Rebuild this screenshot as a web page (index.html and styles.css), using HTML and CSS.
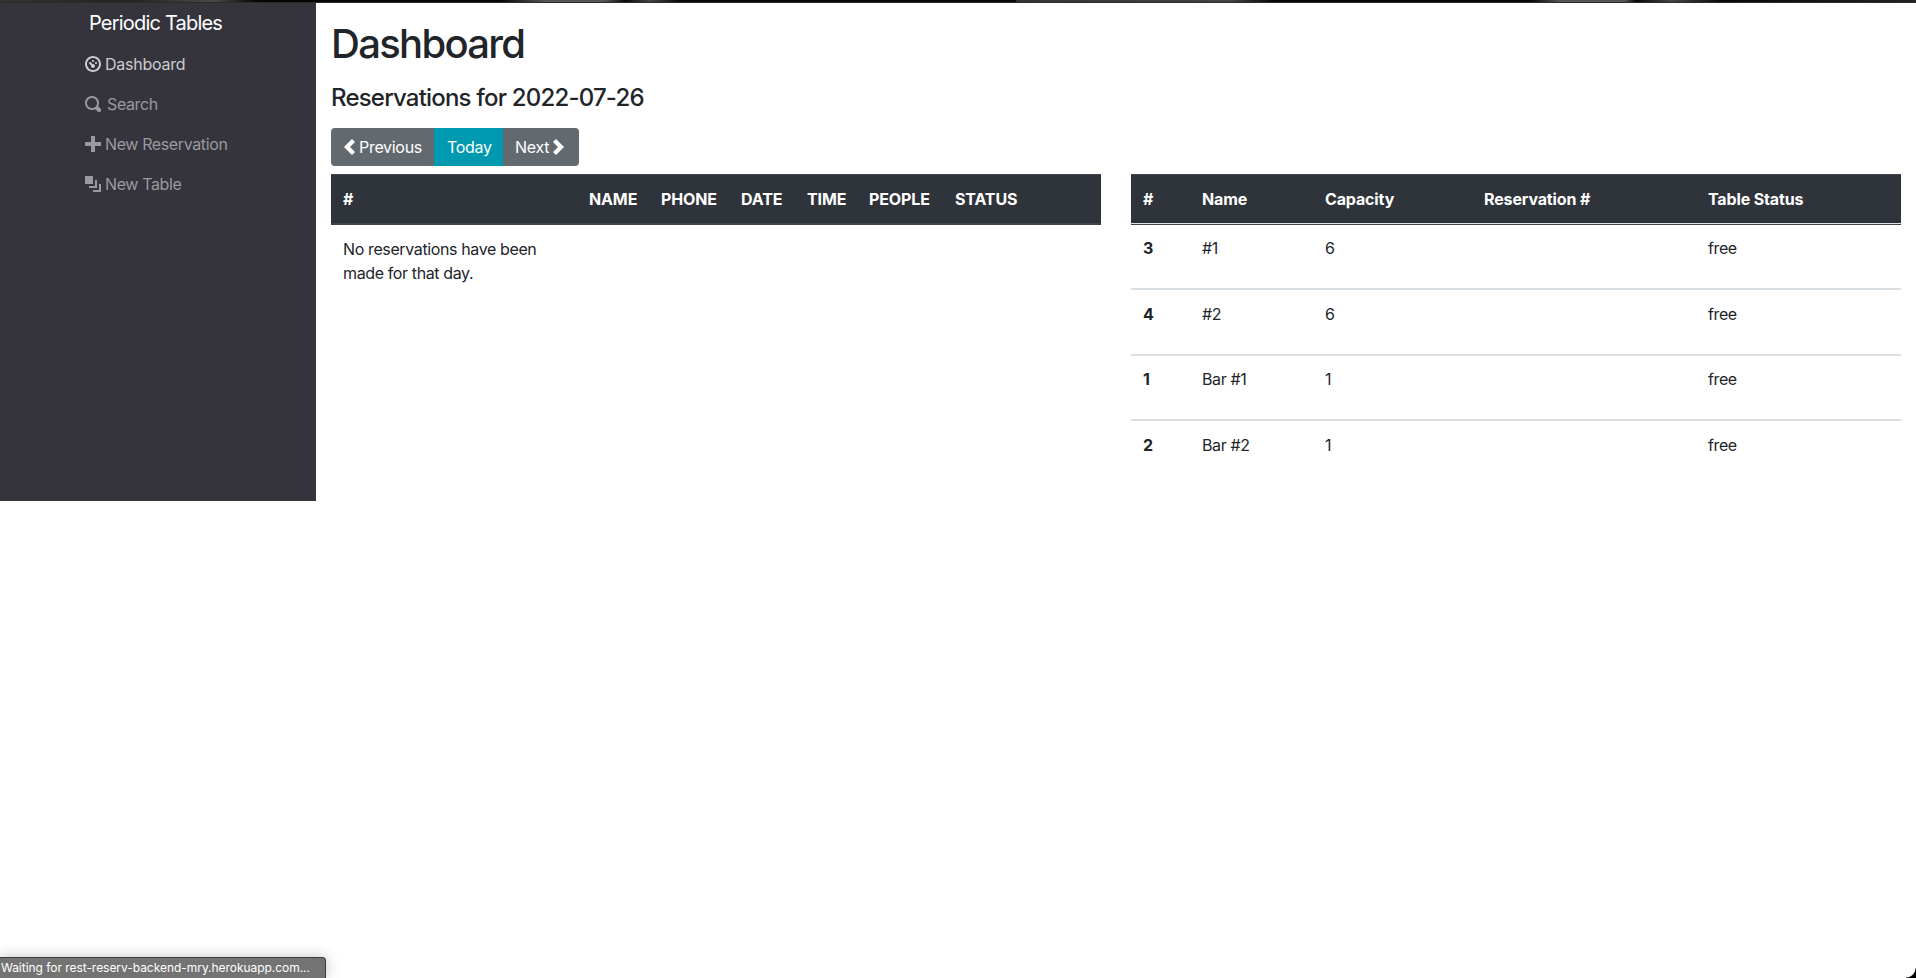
FILE: index.html
```html
<!DOCTYPE html>
<html lang="en">
<head>
<meta charset="utf-8">
<title>Periodic Tables</title>
<link rel="stylesheet" href="styles.css">
</head>
<body>
<div class="strip"></div>
<div class="layout">
  <nav class="sidebar">
    <a class="brand">Periodic Tables</a>
    <ul class="menu">
      <li class="active"><svg class="oi" viewBox="0 0 8 8"><path d="M4 0c-2.2 0-4 1.8-4 4s1.8 4 4 4 4-1.8 4-4-1.8-4-4-4zm0 1c1.66 0 3 1.34 3 3s-1.34 3-3 3-3-1.34-3-3 1.34-3 3-3zm0 1c-.28 0-.5.22-.5.5s.22.5.5.5.5-.22.5-.5-.22-.5-.5-.5zm-1.66 1a.5.5 0 0 0-.19.84l.91.91c-.02.08-.06.16-.06.25 0 .55.45 1 1 1s1-.45 1-1-.45-1-1-1c-.09 0-.17.04-.25.06l-.91-.91a.5.5 0 0 0-.5-.16zm3.16 0c-.28 0-.5.22-.5.5s.22.5.5.5.5-.22.5-.5-.22-.5-.5-.5z"/></svg><span>Dashboard</span></li>
      <li class="search"><svg class="oi" viewBox="0 0 8 8"><path d="M3.5 0c-1.93 0-3.5 1.57-3.5 3.5s1.57 3.5 3.5 3.5c.59 0 1.17-.14 1.66-.41a1 1 0 0 0 .13.13l1 1a1.02 1.02 0 1 0 1.44-1.44l-1-1a1 1 0 0 0-.16-.13c.27-.49.44-1.06.44-1.66 0-1.93-1.55-3.5-3.5-3.5zm0 1c1.39 0 2.5 1.11 2.5 2.5 0 .66-.24 1.27-.66 1.72l-.03.03a1 1 0 0 0-.13.13c-.44.4-1.04.63-1.69.63-1.39 0-2.5-1.11-2.5-2.5s1.11-2.5 2.5-2.5z"/></svg><span>Search</span></li>
      <li><svg class="oi" viewBox="0 0 8 8"><path d="M3 0v3h-3v2h3v3h2v-3h3v-2h-3v-3h-2z"/></svg><span>New Reservation</span></li>
      <li><svg class="oi" viewBox="0 0 8 8"><path d="M0 0v4h4v-4h-4zm5 2v3h-3v1h4v-4h-1zm2 2v3h-3v1h4v-4h-1z"/></svg><span>New Table</span></li>
    </ul>
  </nav>
  <main class="content">
    <h1>Dashboard</h1>
    <h4>Reservations for 2022-07-26</h4>
    <div class="btn-group">
      <button class="btn prev"><svg class="chev" viewBox="1 0 5.5 8"><path d="M5 0l-4 4 4 4 1.5-1.5-2.5-2.5 2.5-2.5-1.5-1.5z"/></svg><span>Previous</span></button>
      <button class="btn today"><span>Today</span></button>
      <button class="btn next"><span>Next</span><svg class="chev" viewBox="1 0 5.5 8"><path d="M2.5 0l-1.5 1.5 2.5 2.5-2.5 2.5 1.5 1.5 4-4-4-4z"/></svg></button>
    </div>
    <div class="tables">
      <table class="reservations">
        <colgroup><col class="r1"><col class="r2"><col class="r3"><col class="r4"><col class="r5"><col class="r6"><col></colgroup>
        <thead><tr><th>#</th><th>NAME</th><th>PHONE</th><th>DATE</th><th>TIME</th><th>PEOPLE</th><th>STATUS</th></tr></thead>
        <tbody><tr><td>No reservations have been made for that day.</td></tr></tbody>
      </table>
      <table class="seating">
        <colgroup><col class="s1"><col class="s2"><col class="s3"><col class="s4"><col></colgroup>
        <thead><tr><th>#</th><th>Name</th><th>Capacity</th><th>Reservation #</th><th>Table Status</th></tr></thead>
        <tbody>
          <tr><th>3</th><td>#1</td><td>6</td><td></td><td>free</td></tr>
          <tr><th>4</th><td>#2</td><td>6</td><td></td><td>free</td></tr>
          <tr><th>1</th><td>Bar #1</td><td>1</td><td></td><td>free</td></tr>
          <tr><th>2</th><td>Bar #2</td><td>1</td><td></td><td>free</td></tr>
        </tbody>
      </table>
    </div>
  </main>
</div>
<div class="status">Waiting for rest-reserv-backend-mry.herokuapp.com...</div>
<div class="corner"></div>
</body>
</html>
```
FILE: styles.css
```css
* { box-sizing: border-box; }
body {
  margin: 0;
  height: 978px;
  overflow: hidden;
  background: #fff;
  color: #212529;
  font: 400 16px/24px Inter, "Liberation Sans", sans-serif;
  letter-spacing: -0.38px;
}
.strip {
  height: 3px;
  border-bottom: 1px solid #2b2b2b;
  background: linear-gradient(90deg, #333 0, #222 130px, #4a4a4a 214px, #050505 257px, #050505 500px, #555 545px, #555 605px, #080808 625px, #444 650px, #080808 680px, #080808 1015px, #333 1017px, #444 1230px, #050505 1275px, #050505 1530px, #555 1560px, #555 1625px, #080808 1636px, #444 1672px, #080808 1722px, #222 1916px);
}
.layout { display: flex; height: 498px; }
.sidebar { width: 316px; background: #35343d; padding: 5px 0 0 85px; }
.brand { display: block; padding-left: 4px; font-size: 20px; line-height: 30px; color: #fff; letter-spacing: -0.8px; }
.menu { list-style: none; margin: 6px 0 0; padding: 0; }
.menu li { display: flex; align-items: center; gap: 4px; height: 40px; color: #9a999e; }
.menu .active { color: #ccccce; letter-spacing: -0.25px; }
.menu .search { gap: 6px; }
.oi { width: 16px; height: 16px; fill: currentColor; }
.content { flex: 1; padding: 17px 15px 0; }
h1 { margin: 0 0 15px; font-size: 40px; line-height: 48px; font-weight: 500; letter-spacing: -1.7px; }
h4 { margin: 0 0 16px; font-size: 24px; line-height: 29px; font-weight: 500; letter-spacing: -0.8px; }
.btn-group { display: flex; height: 38px; width: 248px; border-radius: 4px; overflow: hidden; }
.btn { display: flex; align-items: center; border: 0; margin: 0; padding: 0 13px; gap: 4px; background: #626a70; color: #fff; font: inherit; letter-spacing: -0.3px; }
.prev { width: 103px; }
.today { width: 69px; background: #0099b0; }
.next { width: 76px; padding: 0 12px; }
.chev { flex: none; width: 11px; height: 16px; fill: currentColor; }
.tables { display: flex; gap: 30px; margin-top: 8px; align-items: flex-start; }
table { width: 770px; table-layout: fixed; border-collapse: separate; border-spacing: 0; text-align: left; }
th, td { padding: 12px; vertical-align: top; }
thead th { height: 51px; background: #2f333a; color: #fff; font-weight: 700; letter-spacing: -0.14px; border-top: 1px solid #3e444b; border-bottom: 2px solid #3e444b; white-space: nowrap; }
.seating thead th { border-bottom: 1px solid #3e444b; box-shadow: inset 0 -1px #dee2e6; }
.r1 { width: 246px; } .r2 { width: 72px; } .r3 { width: 80px; } .r4 { width: 66px; } .r5 { width: 62px; } .r6 { width: 86px; }
.s1 { width: 59px; } .s2 { width: 123px; } .s3 { width: 159px; } .s4 { width: 224px; }
.seating tbody tr > * { height: 66px; border-bottom: 2px solid #d9dee3; }
.seating tbody tr:nth-child(odd) > * { height: 65px; padding-top: 11px; }
.seating tbody tr:last-child > * { border-bottom: 0; }
.status { position: absolute; left: 0; bottom: 0; width: 326px; height: 21px; border-top: 1px solid #3c3c3c; border-right: 1px solid #3c3c3c; border-top-right-radius: 4px; background: #737373; box-shadow: 0 0 14px rgba(0, 0, 0, 0.25); color: #fff; font-size: 12px; line-height: 19px; padding-left: 1px; letter-spacing: -0.04px; }
.corner { position: absolute; right: 0; bottom: 0; width: 10px; height: 10px; background: radial-gradient(circle at 0 0, transparent 9px, #000 10px); }
```
